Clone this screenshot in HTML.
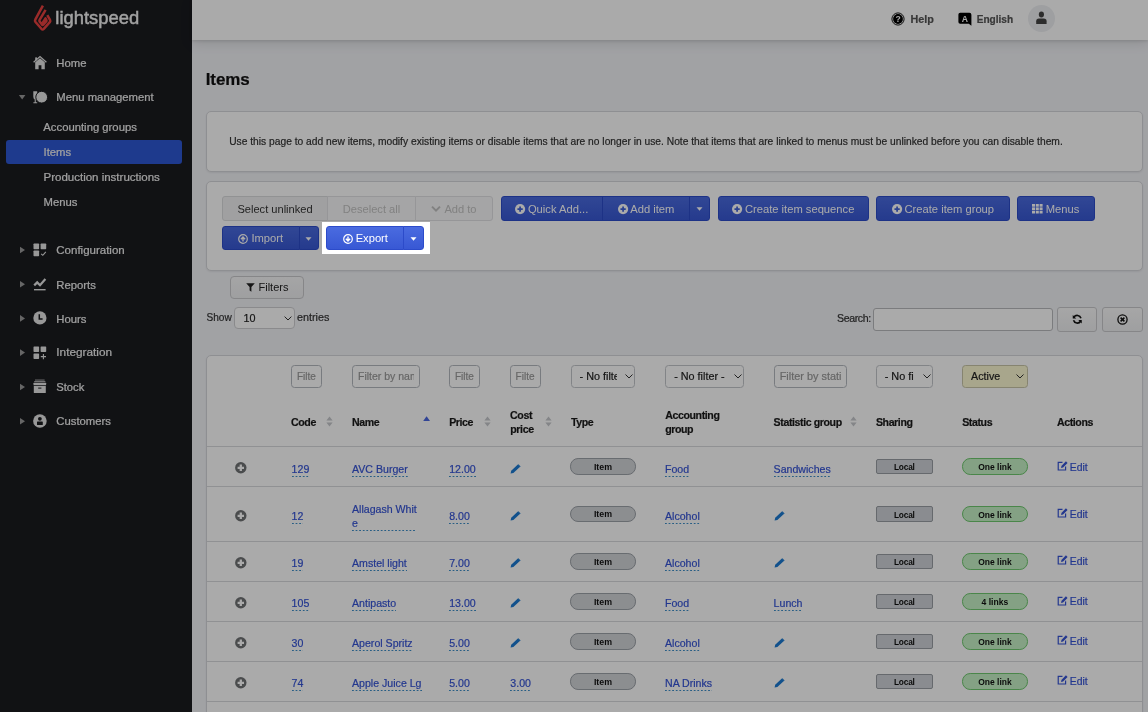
<!DOCTYPE html><html><head><meta charset="utf-8"><style>
*{margin:0;padding:0;box-sizing:border-box}
html,body{width:1148px;height:712px;overflow:hidden;background:#f2f3f7;font-family:"Liberation Sans",sans-serif}
.t{position:absolute;line-height:1;white-space:nowrap;-webkit-text-stroke:0.2px currentColor}
.r{position:absolute}
svg{position:absolute;overflow:visible}
</style></head><body><div id="root" style="position:absolute;left:0;top:0;width:1148px;height:712px;overflow:hidden;will-change:transform"><div class="r" style="left:192px;top:0px;width:956px;height:712px;background:#f2f3f7"></div>
<div class="r" style="left:0px;top:0px;width:192px;height:712px;background:#1a1b1f"></div>
<svg style="left:0;top:0" width="192" height="40"><g fill="none" stroke="#e8413f" stroke-width="2.5" stroke-linejoin="round" stroke-linecap="butt"><path d="M42.9,5.6 L35.4,19.4 Q34.6,20.8 35.5,22 L41.4,28.8 Q42.6,30 43.8,28.8 L49.8,22.2 Q50.7,21 50,19.8 L47.3,15.2"/><path d="M45.6,9.8 L39.6,19.8 Q39,20.9 39.8,21.8 L42,24.6 Q42.6,25.3 43.3,24.6 L46.2,21.4 Q46.8,20.7 46.4,20 L45.5,18.4 L42.6,23"/></g></svg>
<div class="t" style="left:55.30px;top:8.92px;font-size:18.4px;font-weight:400;color:#f2f2f2;-webkit-text-stroke:0.45px #f2f2f2">lightspeed</div>
<svg style="left:33px;top:55px" width="14" height="15" viewBox="0 0 14 15"><path d="M1,1.5 L1,1.5" /><path d="M0.6,7.3 L7,1.6 L13.4,7.3" fill="none" stroke="#e4e4e4" stroke-width="1.3"/><path d="M2.2,7.3 L7,3.2 L11.8,7.3 L11.8,14.2 L8.4,14.2 L8.4,10.2 L5.6,10.2 L5.6,14.2 L2.2,14.2Z" fill="#e4e4e4"/><rect x="2.2" y="2.4" width="1.8" height="3" fill="#e4e4e4"/></svg>
<div class="t" style="left:56.30px;top:58.03px;font-size:11.3px;font-weight:400;color:#f0f0f0;">Home</div>
<svg style="left:0;top:0" width="30" height="712"><path d="M18.9,95 L25.4,95 L22.15,99.4Z" fill="#9a9a9a"/></svg>
<svg style="left:33px;top:91px" width="15" height="13" viewBox="0 0 15 13"><path d="M0.3,0.3 L4.2,0.3 L4.2,5.6 Q4.2,8 2.8,8.4 L2.8,11.3 L4.2,11.3 L4.2,12.2 L0.4,12.2 L0.4,11.3 L1.7,11.3 L1.7,8.4 Q0.3,8 0.3,5.6Z" fill="#e4e4e4"/><circle cx="8.7" cy="6.2" r="5.9" fill="#e4e4e4" stroke="#1a1b1f" stroke-width="1"/><path d="M3.3,4 Q5,1 8.6,0.5" fill="none" stroke="#1a1b1f" stroke-width="0"/></svg>
<div class="t" style="left:56.30px;top:92.03px;font-size:11.3px;font-weight:400;color:#f0f0f0;">Menu management</div>
<div class="r" style="left:6px;top:140px;width:176px;height:24px;background:#2e57d4;border-radius:3px"></div>
<div class="t" style="left:43.30px;top:121.73px;font-size:11.3px;font-weight:400;color:#f0f0f0;">Accounting groups</div>
<div class="t" style="left:43.50px;top:147.13px;font-size:11.3px;font-weight:400;color:#f0f0f0;">Items</div>
<div class="t" style="left:43.50px;top:172.07px;font-size:11.5px;font-weight:400;color:#f0f0f0;">Production instructions</div>
<div class="t" style="left:43.50px;top:197.43px;font-size:11.3px;font-weight:400;color:#f0f0f0;">Menus</div>
<svg style="left:0;top:0" width="30" height="712"><path d="M20,246.7 L25,250 L20,253.3Z" fill="#9a9a9a"/></svg>
<svg style="left:33px;top:243px" width="14" height="14" viewBox="0 0 14 14"><rect x="0.5" y="0.6" width="5.6" height="5.6" rx="0.7" fill="#e4e4e4"/><rect x="7.6" y="0.6" width="5.6" height="5.6" rx="0.7" fill="#e4e4e4"/><rect x="0.5" y="7.6" width="5.6" height="5.6" rx="0.7" fill="#e4e4e4"/><path d="M8.2,10.8 L9.8,12.3 L12.8,8.8" fill="none" stroke="#e4e4e4" stroke-width="1.1"/></svg>
<div class="t" style="left:56.30px;top:245.17px;font-size:11.5px;font-weight:400;color:#f0f0f0;">Configuration</div>
<svg style="left:0;top:0" width="30" height="712"><path d="M20,281.0 L25,284.3 L20,287.6Z" fill="#9a9a9a"/></svg>
<svg style="left:33px;top:277px" width="14" height="15" viewBox="0 0 14 15"><path d="M1.2,8.4 L4.2,5.4 L7,8.2 L12.4,2" fill="none" stroke="#e4e4e4" stroke-width="2.2" stroke-linejoin="miter"/><rect x="1" y="12" width="11.6" height="1.4" fill="#e4e4e4"/></svg>
<div class="t" style="left:56.30px;top:279.63px;font-size:11.3px;font-weight:400;color:#f0f0f0;">Reports</div>
<svg style="left:0;top:0" width="30" height="712"><path d="M20,315.09999999999997 L25,318.4 L20,321.7Z" fill="#9a9a9a"/></svg>
<svg style="left:33px;top:311px" width="14" height="15" viewBox="0 0 14 15"><circle cx="6.9" cy="6.9" r="6.6" fill="#e4e4e4"/><path d="M6.3,3.2 L6.3,7.9 L9.6,7.9" fill="none" stroke="#1a1b1f" stroke-width="1.5"/></svg>
<div class="t" style="left:56.30px;top:313.63px;font-size:11.3px;font-weight:400;color:#f0f0f0;">Hours</div>
<svg style="left:0;top:0" width="30" height="712"><path d="M20,349.3 L25,352.6 L20,355.90000000000003Z" fill="#9a9a9a"/></svg>
<svg style="left:33px;top:346px" width="14" height="14" viewBox="0 0 14 14"><rect x="0.5" y="0.4" width="5.6" height="5.6" rx="0.7" fill="#e4e4e4"/><rect x="7.6" y="0.4" width="5.6" height="5.6" rx="0.7" fill="#e4e4e4"/><rect x="0.5" y="7.4" width="5.6" height="5.6" rx="0.7" fill="#e4e4e4"/><path d="M10.4,8 L10.4,13.2 M7.8,10.6 L13,10.6" fill="none" stroke="#e4e4e4" stroke-width="1.1"/></svg>
<div class="t" style="left:56.30px;top:347.21px;font-size:11.8px;font-weight:400;color:#f0f0f0;">Integration</div>
<svg style="left:0;top:0" width="30" height="712"><path d="M20,383.7 L25,387 L20,390.3Z" fill="#9a9a9a"/></svg>
<svg style="left:33px;top:379px" width="14" height="15" viewBox="0 0 14 15"><rect x="2" y="0.6" width="9.6" height="0.9" fill="#e4e4e4" opacity=".8"/><rect x="1.2" y="2.2" width="11.2" height="0.9" fill="#e4e4e4" opacity=".9"/><rect x="0.5" y="3.8" width="12.6" height="2.4" rx="0.5" fill="#e4e4e4"/><path d="M0.8,7 L12.8,7 L12.8,13.4 Q12.8,14 12.2,14 L1.4,14 Q0.8,14 0.8,13.4Z" fill="#e4e4e4"/><rect x="5.2" y="8.6" width="3.2" height="1" fill="#1a1b1f"/></svg>
<div class="t" style="left:56.30px;top:381.72px;font-size:11.2px;font-weight:400;color:#f0f0f0;">Stock</div>
<svg style="left:0;top:0" width="30" height="712"><path d="M20,418.0 L25,421.3 L20,424.6Z" fill="#9a9a9a"/></svg>
<svg style="left:33px;top:414px" width="14" height="15" viewBox="0 0 14 15"><circle cx="6.9" cy="7" r="6.8" fill="#e4e4e4"/><circle cx="6.9" cy="4.8" r="1.9" fill="#1a1b1f"/><rect x="4" y="7.4" width="5.8" height="3.6" rx="0.6" fill="#1a1b1f"/></svg>
<div class="t" style="left:56.30px;top:415.63px;font-size:11.3px;font-weight:400;color:#f0f0f0;">Customers</div>
<div class="t" style="left:205.80px;top:71.41px;font-size:17px;font-weight:700;color:#111;letter-spacing:-0.15px">Items</div>
<div class="r" style="left:206px;top:111px;width:937px;height:61px;background:#fff;border:1px solid #d6d7db;border-radius:5px;box-shadow:0 1px 2px rgba(0,0,0,.07)"></div>
<div class="t" style="left:229.20px;top:137.22px;font-size:10.25px;font-weight:400;color:#333;">Use this page to add new items, modify existing items or disable items that are no longer in use. Note that items that are linked to menus must be unlinked before you can disable them.</div>
<div class="r" style="left:206px;top:180.5px;width:937px;height:90.5px;background:#fff;border:1px solid #d6d7db;border-radius:5px;box-shadow:0 1px 2px rgba(0,0,0,.07)"></div>
<div style="padding-top:2px;position:absolute;display:flex;align-items:center;justify-content:center;font-size:11.1px;line-height:1;white-space:nowrap;left:222px;top:196px;width:106px;height:24.5px;color:#333;background:#f1f1f2;border:1px solid #dadbdd;border-radius:3px 0 0 3px">Select unlinked</div>
<div style="padding-top:2px;position:absolute;display:flex;align-items:center;justify-content:center;font-size:11.1px;line-height:1;white-space:nowrap;left:327px;top:196px;width:89px;height:24.5px;color:#c2c2c2;background:#f8f8f9;border:1px solid #e2e2e4">Deselect all</div>
<div style="padding-top:2px;position:absolute;display:flex;align-items:center;justify-content:center;font-size:11.1px;line-height:1;white-space:nowrap;left:415px;top:196px;width:78px;height:24.5px;color:#c2c2c2;background:#f8f8f9;border:1px solid #e2e2e4;border-radius:0 3px 3px 0"><svg style="position:static;margin-right:3px" width="10" height="8" viewBox="0 0 10 8"><path d="M1,1.6 L5,5.6 L9,1.6" fill="none" stroke="#c2c2c2" stroke-width="2"/></svg>Add to</div>
<div style="padding-top:2px;position:absolute;display:flex;align-items:center;justify-content:center;font-size:11.2px;line-height:1;white-space:nowrap;left:500.5px;top:196px;width:102.5px;height:24.80000000000001px;color:#fff;background:linear-gradient(#4a6be0,#3858d4);border:1px solid #2c4bca;border-radius:3px 0 0 3px;"><svg style="position:static;margin-right:2.5px" width="10.2" height="10.2" viewBox="0 0 10 10"><circle cx="5" cy="5" r="5" fill="#fff"/><path d="M5,2.4 L5,7.6 M2.4,5 L7.6,5" stroke="#3f60d9" stroke-width="1.7"/></svg>Quick Add...</div>
<div style="padding-top:2px;position:absolute;display:flex;align-items:center;justify-content:center;font-size:11.2px;line-height:1;white-space:nowrap;left:602px;top:196px;width:88px;height:24.80000000000001px;color:#fff;background:linear-gradient(#4a6be0,#3858d4);border:1px solid #2c4bca;border-radius:0;"><svg style="position:static;margin-right:2.5px" width="10.2" height="10.2" viewBox="0 0 10 10"><circle cx="5" cy="5" r="5" fill="#fff"/><path d="M5,2.4 L5,7.6 M2.4,5 L7.6,5" stroke="#3f60d9" stroke-width="1.7"/></svg>Add item</div>
<div style="padding-top:2px;position:absolute;display:flex;align-items:center;justify-content:center;font-size:11.2px;line-height:1;white-space:nowrap;left:689px;top:196px;width:21.399999999999977px;height:24.80000000000001px;color:#fff;background:linear-gradient(#4a6be0,#3858d4);border:1px solid #2c4bca;border-radius:0 3px 3px 0;"><svg style="position:static" width="7" height="4" viewBox="0 0 7 4"><path d="M0.5,0.3 L6.5,0.3 L3.5,3.7Z" fill="#fff"/></svg></div>
<div style="padding-top:2px;position:absolute;display:flex;align-items:center;justify-content:center;font-size:11.2px;line-height:1;white-space:nowrap;left:717.6px;top:196px;width:151.39999999999998px;height:24.80000000000001px;color:#fff;background:linear-gradient(#4a6be0,#3858d4);border:1px solid #2c4bca;border-radius:3px;"><svg style="position:static;margin-right:2.5px" width="10.2" height="10.2" viewBox="0 0 10 10"><circle cx="5" cy="5" r="5" fill="#fff"/><path d="M5,2.4 L5,7.6 M2.4,5 L7.6,5" stroke="#3f60d9" stroke-width="1.7"/></svg>Create item sequence</div>
<div style="padding-top:2px;position:absolute;display:flex;align-items:center;justify-content:center;font-size:11.2px;line-height:1;white-space:nowrap;left:876.3px;top:196px;width:133.30000000000007px;height:24.80000000000001px;color:#fff;background:linear-gradient(#4a6be0,#3858d4);border:1px solid #2c4bca;border-radius:3px;"><svg style="position:static;margin-right:2.5px" width="10.2" height="10.2" viewBox="0 0 10 10"><circle cx="5" cy="5" r="5" fill="#fff"/><path d="M5,2.4 L5,7.6 M2.4,5 L7.6,5" stroke="#3f60d9" stroke-width="1.7"/></svg>Create item group</div>
<div style="padding-top:2px;position:absolute;display:flex;align-items:center;justify-content:center;font-size:11.2px;line-height:1;white-space:nowrap;left:1016.8px;top:196px;width:78.0px;height:24.80000000000001px;color:#fff;background:linear-gradient(#4a6be0,#3858d4);border:1px solid #2c4bca;border-radius:3px;"><svg style="position:static;margin-right:2.5px" width="11" height="10" viewBox="0 0 11 10"><rect x="0.0" y="0.0" width="3" height="2.7" fill="#fff"/><rect x="0.0" y="3.4" width="3" height="2.7" fill="#fff"/><rect x="0.0" y="6.8" width="3" height="2.7" fill="#fff"/><rect x="3.8" y="0.0" width="3" height="2.7" fill="#fff"/><rect x="3.8" y="3.4" width="3" height="2.7" fill="#fff"/><rect x="3.8" y="6.8" width="3" height="2.7" fill="#fff"/><rect x="7.6" y="0.0" width="3" height="2.7" fill="#fff"/><rect x="7.6" y="3.4" width="3" height="2.7" fill="#fff"/><rect x="7.6" y="6.8" width="3" height="2.7" fill="#fff"/></svg>Menus</div>
<div style="padding-top:2px;position:absolute;display:flex;align-items:center;justify-content:center;font-size:11.2px;line-height:1;white-space:nowrap;left:222px;top:226px;width:77.5px;height:23.80000000000001px;color:#fff;background:linear-gradient(#4a6be0,#3858d4);border:1px solid #2c4bca;border-radius:3px 0 0 3px;"><svg style="position:static;margin-right:3px" width="10" height="10" viewBox="0 0 10 10"><circle cx="5" cy="5" r="4.3" fill="none" stroke="#fff" stroke-width="1.2"/><path d="M5,7.6 L5,3.6 M2.9,5.3 L5,3 L7.1,5.3" fill="none" stroke="#fff" stroke-width="1.4"/></svg>Import</div>
<div style="padding-top:2px;position:absolute;display:flex;align-items:center;justify-content:center;font-size:11.2px;line-height:1;white-space:nowrap;left:298.5px;top:226px;width:20.80000000000001px;height:23.80000000000001px;color:#fff;background:linear-gradient(#4a6be0,#3858d4);border:1px solid #2c4bca;border-radius:0 3px 3px 0;"><svg style="position:static" width="7" height="4" viewBox="0 0 7 4"><path d="M0.5,0.3 L6.5,0.3 L3.5,3.7Z" fill="#fff"/></svg></div>
<div style="padding-top:2px;position:absolute;display:flex;align-items:center;justify-content:center;font-size:11.2px;line-height:1;white-space:nowrap;left:326.3px;top:226px;width:78.0px;height:23.80000000000001px;color:#fff;background:linear-gradient(#4a6be0,#3858d4);border:1px solid #2c4bca;border-radius:3px 0 0 3px;"><svg style="position:static;margin-right:3px" width="10" height="10" viewBox="0 0 10 10"><circle cx="5" cy="5" r="4.3" fill="none" stroke="#fff" stroke-width="1.2"/><path d="M5,2.4 L5,6.4 M2.9,4.7 L5,7 L7.1,4.7" fill="none" stroke="#fff" stroke-width="1.4"/></svg>Export</div>
<div style="padding-top:2px;position:absolute;display:flex;align-items:center;justify-content:center;font-size:11.2px;line-height:1;white-space:nowrap;left:403.3px;top:226px;width:20.5px;height:23.80000000000001px;color:#fff;background:linear-gradient(#4a6be0,#3858d4);border:1px solid #2c4bca;border-radius:0 3px 3px 0;"><svg style="position:static" width="7" height="4" viewBox="0 0 7 4"><path d="M0.5,0.3 L6.5,0.3 L3.5,3.7Z" fill="#fff"/></svg></div>
<div style="padding-top:2px;position:absolute;display:flex;align-items:center;justify-content:center;font-size:11.1px;line-height:1;white-space:nowrap;padding-top:0;left:230.3px;top:275.6px;width:73.4px;height:23.8px;color:#222;background:linear-gradient(#f8f8f9,#eeeff1);border:1px solid #c9cacd;border-radius:4px;font-size:11px"><svg style="position:static;margin-right:4px" width="9" height="9" viewBox="0 0 9 9"><path d="M0.2,0.2 L8.8,0.2 L5.4,4 L5.4,8.8 L3.6,7.4 L3.6,4Z" fill="#222"/></svg>Filters</div>
<div class="t" style="left:206.50px;top:312.85px;font-size:10.1px;font-weight:400;color:#333;">Show</div>
<div class="r" style="left:234px;top:307px;width:61px;height:22px;background:#fff;border:1px solid #cfd0d3;border-radius:4px"></div>
<div class="t" style="left:243.40px;top:313.46px;font-size:10.8px;font-weight:400;color:#222;">10</div>
<svg style="left:284px;top:316px" width="8" height="5" viewBox="0 0 8 5"><path d="M0.6,0.6 L4,4 L7.4,0.6" fill="none" stroke="#333" stroke-width="1"/></svg>
<div class="t" style="left:297.00px;top:312.26px;font-size:10.8px;font-weight:400;color:#333;">entries</div>
<div class="t" style="left:837.00px;top:312.93px;font-size:10.6px;font-weight:400;color:#333;letter-spacing:-0.4px">Search:</div>
<div class="r" style="left:873.4px;top:308px;width:179.3px;height:22.8px;background:#fff;border:1px solid #b9babd;border-radius:3px"></div>
<div style="padding-top:2px;position:absolute;display:flex;align-items:center;justify-content:center;font-size:11.1px;line-height:1;white-space:nowrap;padding-top:0;left:1057.1px;top:307.1px;width:40.4px;height:24.6px;background:linear-gradient(#fafafa,#eeeff1);border:1px solid #c9cacd;border-radius:3px"><svg style="position:static" width="10.5" height="10.5" viewBox="0 0 11 11"><path d="M9.4,4.4 A4.1,4.1 0 0 0 2,3.4" fill="none" stroke="#111" stroke-width="1.7"/><path d="M1.6,6.6 A4.1,4.1 0 0 0 9,7.6" fill="none" stroke="#111" stroke-width="1.7"/><path d="M0.8,1 L0.8,4.6 L4.4,4.6Z" fill="#111"/><path d="M10.2,10 L10.2,6.4 L6.6,6.4Z" fill="#111"/></svg></div>
<div style="padding-top:2px;position:absolute;display:flex;align-items:center;justify-content:center;font-size:11.1px;line-height:1;white-space:nowrap;padding-top:0;left:1101.7px;top:307.1px;width:41.3px;height:24.6px;background:linear-gradient(#fafafa,#eeeff1);border:1px solid #c9cacd;border-radius:3px"><svg style="position:static" width="11" height="11" viewBox="0 0 11 11"><circle cx="5.5" cy="5.5" r="4.6" fill="none" stroke="#111" stroke-width="1.3"/><path d="M3.6,3.6 L7.4,7.4 M7.4,3.6 L3.6,7.4" stroke="#111" stroke-width="1.5"/></svg></div>
<div class="r" style="left:206px;top:355px;width:937px;height:405px;background:#fff;border:1px solid #d6d7db;border-radius:5px;box-shadow:0 1px 2px rgba(0,0,0,.07)"></div>
<div class="r" style="left:291.1px;top:365.1px;width:31.099999999999966px;height:22.5px;background:#fff;border:1px solid #b4b9bf;border-radius:3.5px;overflow:hidden"></div>
<div class="t" style="left:297px;top:371.74px;font-size:10.0px;color:#9a9a9a;width:20px;overflow:hidden">Filte</div>
<div class="r" style="left:352px;top:365.1px;width:67.5px;height:22.5px;background:#fff;border:1px solid #b4b9bf;border-radius:3.5px;overflow:hidden"></div>
<div class="t" style="left:358px;top:371.31px;font-size:10.5px;color:#9a9a9a;width:56px;overflow:hidden">Filter by name</div>
<div class="r" style="left:449.2px;top:365.1px;width:31.19999999999999px;height:22.5px;background:#fff;border:1px solid #b4b9bf;border-radius:3.5px;overflow:hidden"></div>
<div class="t" style="left:455px;top:371.74px;font-size:10.0px;color:#9a9a9a;width:20.5px;overflow:hidden">Filte</div>
<div class="r" style="left:509.7px;top:365.1px;width:31.19999999999999px;height:22.5px;background:#fff;border:1px solid #b4b9bf;border-radius:3.5px;overflow:hidden"></div>
<div class="t" style="left:515.6px;top:371.74px;font-size:10.0px;color:#9a9a9a;width:20.399999999999977px;overflow:hidden">Filte</div>
<div class="r" style="left:570.5px;top:365.1px;width:64.70000000000005px;height:22.5px;background:#fff;border:1px solid #c4c7cb;border-radius:3.5px"></div>
<div class="t" style="left:579.6px;top:371.36px;font-size:10.8px;color:#222;width:37.89999999999998px;overflow:hidden">- No filter -</div>
<svg style="left:625px;top:374px" width="8" height="5" viewBox="0 0 8 5"><path d="M0.5,0.5 L4,4 L7.5,0.5" fill="none" stroke="#333" stroke-width="1"/></svg>
<div class="r" style="left:665.4px;top:365.1px;width:78.5px;height:22.5px;background:#fff;border:1px solid #c4c7cb;border-radius:3.5px"></div>
<div class="t" style="left:674.2px;top:371.36px;font-size:10.8px;color:#222;width:51.799999999999955px;overflow:hidden">- No filter -</div>
<svg style="left:734px;top:374px" width="8" height="5" viewBox="0 0 8 5"><path d="M0.5,0.5 L4,4 L7.5,0.5" fill="none" stroke="#333" stroke-width="1"/></svg>
<div class="r" style="left:773.8px;top:365.1px;width:72.90000000000009px;height:22.5px;background:#fff;border:1px solid #b4b9bf;border-radius:3.5px;overflow:hidden"></div>
<div class="t" style="left:779.7px;top:370.97px;font-size:10.9px;color:#9a9a9a;width:61.799999999999955px;overflow:hidden">Filter by statistic</div>
<div class="r" style="left:876.1px;top:365.1px;width:56.5px;height:22.5px;background:#fff;border:1px solid #c4c7cb;border-radius:3.5px"></div>
<div class="t" style="left:884.7px;top:371.27px;font-size:10.9px;color:#222;width:29.299999999999955px;overflow:hidden">- No filter -</div>
<svg style="left:922.5px;top:374px" width="8" height="5" viewBox="0 0 8 5"><path d="M0.5,0.5 L4,4 L7.5,0.5" fill="none" stroke="#333" stroke-width="1"/></svg>
<div class="r" style="left:962.4px;top:365.1px;width:65.19999999999993px;height:22.5px;background:#fdfad2;border:1px solid #c9c6a8;border-radius:3.5px"></div>
<div class="t" style="left:971.1px;top:371.44px;font-size:10.7px;color:#222;width:33.89999999999998px;overflow:hidden">Active</div>
<svg style="left:1016.3px;top:374px" width="8" height="5" viewBox="0 0 8 5"><path d="M0.5,0.5 L4,4 L7.5,0.5" fill="none" stroke="#333" stroke-width="1"/></svg>
<div class="t" style="left:291.00px;top:417.03px;font-size:10.6px;font-weight:700;color:#1a1a1a;letter-spacing:-0.4px">Code</div>
<svg style="left:326.3px;top:416.4px" width="7" height="11" viewBox="0 0 7 11"><path d="M0.4,4.6 L3.5,0.4 L6.6,4.6Z M0.4,6.4 L3.5,10.6 L6.6,6.4Z" fill="#c6c8cc"/></svg>
<div class="t" style="left:352.00px;top:417.03px;font-size:10.6px;font-weight:700;color:#1a1a1a;letter-spacing:-0.4px">Name</div>
<svg style="left:423px;top:416.4px" width="8" height="6" viewBox="0 0 8 6"><path d="M0.2,5 L3.6,0.2 L7,5Z" fill="#4a66e0"/></svg>
<div class="t" style="left:449.20px;top:417.03px;font-size:10.6px;font-weight:700;color:#1a1a1a;letter-spacing:-0.4px">Price</div>
<svg style="left:484px;top:416.4px" width="7" height="11" viewBox="0 0 7 11"><path d="M0.4,4.6 L3.5,0.4 L6.6,4.6Z M0.4,6.4 L3.5,10.6 L6.6,6.4Z" fill="#c6c8cc"/></svg>
<div class="t" style="left:510.10px;top:409.83px;font-size:10.6px;font-weight:700;color:#1a1a1a;letter-spacing:-0.4px">Cost</div>
<div class="t" style="left:510.30px;top:424.13px;font-size:10.6px;font-weight:700;color:#1a1a1a;letter-spacing:-0.4px">price</div>
<svg style="left:545.2px;top:416.4px" width="7" height="11" viewBox="0 0 7 11"><path d="M0.4,4.6 L3.5,0.4 L6.6,4.6Z M0.4,6.4 L3.5,10.6 L6.6,6.4Z" fill="#c6c8cc"/></svg>
<div class="t" style="left:571.00px;top:417.03px;font-size:10.6px;font-weight:700;color:#1a1a1a;letter-spacing:-0.4px">Type</div>
<div class="t" style="left:665.20px;top:409.83px;font-size:10.6px;font-weight:700;color:#1a1a1a;letter-spacing:-0.4px">Accounting</div>
<div class="t" style="left:665.20px;top:424.13px;font-size:10.6px;font-weight:700;color:#1a1a1a;letter-spacing:-0.4px">group</div>
<div class="t" style="left:773.60px;top:417.03px;font-size:10.6px;font-weight:700;color:#1a1a1a;letter-spacing:-0.4px">Statistic group</div>
<svg style="left:850.2px;top:416.4px" width="7" height="11" viewBox="0 0 7 11"><path d="M0.4,4.6 L3.5,0.4 L6.6,4.6Z M0.4,6.4 L3.5,10.6 L6.6,6.4Z" fill="#c6c8cc"/></svg>
<div class="t" style="left:875.90px;top:417.03px;font-size:10.6px;font-weight:700;color:#1a1a1a;letter-spacing:-0.4px">Sharing</div>
<div class="t" style="left:962.20px;top:417.03px;font-size:10.6px;font-weight:700;color:#1a1a1a;letter-spacing:-0.4px">Status</div>
<div class="t" style="left:1056.90px;top:417.03px;font-size:10.6px;font-weight:700;color:#1a1a1a;letter-spacing:-0.4px">Actions</div>
<div class="r" style="left:207px;top:446px;width:935px;height:1px;background:#d9dadd"></div>
<div class="r" style="left:207px;top:486px;width:935px;height:1px;background:#d9dadd"></div>
<div class="r" style="left:207px;top:541px;width:935px;height:1px;background:#d9dadd"></div>
<div class="r" style="left:207px;top:581px;width:935px;height:1px;background:#d9dadd"></div>
<div class="r" style="left:207px;top:621px;width:935px;height:1px;background:#d9dadd"></div>
<div class="r" style="left:207px;top:661px;width:935px;height:1px;background:#d9dadd"></div>
<div class="r" style="left:207px;top:701px;width:935px;height:1px;background:#d9dadd"></div>
<svg style="left:235.4px;top:462.0px" width="12" height="12" viewBox="0 0 12 12"><circle cx="5.8" cy="5.8" r="5.7" fill="#707274"/><path d="M5.8,2.6 L5.8,9 M2.6,5.8 L9,5.8" stroke="#fff" stroke-width="2.3"/></svg>
<div class="t" style="left:291.6px;top:463.73px;font-size:10.6px;color:#3553d6;padding-bottom:2.6px;background:linear-gradient(90deg,#3d8ec8 0 2.1px,transparent 2.1px) left bottom/3.6px 1px repeat-x">129</div>
<div class="t" style="left:352px;top:463.73px;font-size:10.6px;color:#3553d6;padding-bottom:2.6px;background:linear-gradient(90deg,#3d8ec8 0 2.1px,transparent 2.1px) left bottom/3.6px 1px repeat-x">AVC Burger</div>
<div class="t" style="left:449.2px;top:463.73px;font-size:10.6px;color:#3553d6;padding-bottom:2.6px;background:linear-gradient(90deg,#3d8ec8 0 2.1px,transparent 2.1px) left bottom/3.6px 1px repeat-x">12.00</div>
<svg style="left:509.5px;top:463.7px" width="11" height="10" viewBox="0 0 11 10"><path d="M0.6,9.4 L1.2,6.8 L7.6,0.8 L9.8,3 L3.4,9Z" fill="#1b7ad2"/><path d="M7.4,1 L8.4,0.2 L10.6,2.4 L9.8,3.2Z" fill="#1b7ad2"/></svg>
<div style="position:absolute;left:570.2px;top:458.40px;width:65.5px;height:16.2px;border-radius:8.1px;background:#d2d5d9;border:1px solid #9da2a8;padding-top:1px;display:flex;align-items:center;justify-content:center;font-size:8.8px;font-weight:700;color:#111;line-height:1">Item</div>
<div class="t" style="left:665px;top:463.73px;font-size:10.6px;color:#3553d6;padding-bottom:2.6px;background:linear-gradient(90deg,#3d8ec8 0 2.1px,transparent 2.1px) left bottom/3.6px 1px repeat-x">Food</div>
<div class="t" style="left:773.6px;top:463.73px;font-size:10.6px;color:#3553d6;padding-bottom:2.6px;background:linear-gradient(90deg,#3d8ec8 0 2.1px,transparent 2.1px) left bottom/3.6px 1px repeat-x">Sandwiches</div>
<div style="position:absolute;left:876px;top:458.80px;width:56.7px;height:15.4px;border-radius:2px;background:#cfd3d8;border:1px solid #999ea4;padding-top:1.6px;display:flex;align-items:center;justify-content:center;font-size:8.3px;font-weight:700;color:#111;line-height:1;letter-spacing:-0.2px">Local</div>
<div style="position:absolute;left:962.2px;top:458.30px;width:65.5px;height:16.4px;border-radius:8.2px;background:#c6f2c6;border:1px solid #6fca6f;padding-top:1.6px;display:flex;align-items:center;justify-content:center;font-size:8.5px;font-weight:700;color:#111;line-height:1">One link</div>
<svg style="left:1056.6px;top:461.20px" width="11" height="10" viewBox="0 0 12 11"><path d="M6,1.6 L1.3,1.6 L1.3,9.9 L9.4,9.9 L9.4,6" fill="none" stroke="#3553d6" stroke-width="1.3"/><path d="M4.4,7.6 L4.8,5.4 L9.8,0.4 L11.6,2.2 L6.6,7.2Z" fill="#3553d6"/></svg>
<div class="t" style="left:1069.80px;top:463.10px;font-size:10.4px;font-weight:400;color:#3553d6;">Edit</div>
<svg style="left:235.4px;top:509.49999999999994px" width="12" height="12" viewBox="0 0 12 12"><circle cx="5.8" cy="5.8" r="5.7" fill="#707274"/><path d="M5.8,2.6 L5.8,9 M2.6,5.8 L9,5.8" stroke="#fff" stroke-width="2.3"/></svg>
<div class="t" style="left:291.6px;top:510.93px;font-size:10.6px;color:#3553d6;padding-bottom:2.6px;background:linear-gradient(90deg,#3d8ec8 0 2.1px,transparent 2.1px) left bottom/3.6px 1px repeat-x">12</div>
<div class="t" style="left:352.00px;top:503.53px;font-size:10.6px;font-weight:400;color:#3553d6;">Allagash Whit</div>
<div class="t" style="left:352px;top:517.83px;font-size:10.6px;color:#3553d6;padding-bottom:2.6px;background:linear-gradient(90deg,#3d8ec8 0 2.1px,transparent 2.1px) left bottom/3.6px 1px repeat-x">e<span style="display:inline-block;width:58.2px"></span></div>
<div class="t" style="left:449.2px;top:510.93px;font-size:10.6px;color:#3553d6;padding-bottom:2.6px;background:linear-gradient(90deg,#3d8ec8 0 2.1px,transparent 2.1px) left bottom/3.6px 1px repeat-x">8.00</div>
<svg style="left:509.5px;top:510.9px" width="11" height="10" viewBox="0 0 11 10"><path d="M0.6,9.4 L1.2,6.8 L7.6,0.8 L9.8,3 L3.4,9Z" fill="#1b7ad2"/><path d="M7.4,1 L8.4,0.2 L10.6,2.4 L9.8,3.2Z" fill="#1b7ad2"/></svg>
<div style="position:absolute;left:570.2px;top:505.90px;width:65.5px;height:16.2px;border-radius:8.1px;background:#d2d5d9;border:1px solid #9da2a8;padding-top:1px;display:flex;align-items:center;justify-content:center;font-size:8.8px;font-weight:700;color:#111;line-height:1">Item</div>
<div class="t" style="left:665px;top:510.93px;font-size:10.6px;color:#3553d6;padding-bottom:2.6px;background:linear-gradient(90deg,#3d8ec8 0 2.1px,transparent 2.1px) left bottom/3.6px 1px repeat-x">Alcohol</div>
<svg style="left:773.6px;top:510.9px" width="11" height="10" viewBox="0 0 11 10"><path d="M0.6,9.4 L1.2,6.8 L7.6,0.8 L9.8,3 L3.4,9Z" fill="#1b7ad2"/><path d="M7.4,1 L8.4,0.2 L10.6,2.4 L9.8,3.2Z" fill="#1b7ad2"/></svg>
<div style="position:absolute;left:876px;top:506.30px;width:56.7px;height:15.4px;border-radius:2px;background:#cfd3d8;border:1px solid #999ea4;padding-top:1.6px;display:flex;align-items:center;justify-content:center;font-size:8.3px;font-weight:700;color:#111;line-height:1;letter-spacing:-0.2px">Local</div>
<div style="position:absolute;left:962.2px;top:505.80px;width:65.5px;height:16.4px;border-radius:8.2px;background:#c6f2c6;border:1px solid #6fca6f;padding-top:1.6px;display:flex;align-items:center;justify-content:center;font-size:8.5px;font-weight:700;color:#111;line-height:1">One link</div>
<svg style="left:1056.6px;top:508.40px" width="11" height="10" viewBox="0 0 12 11"><path d="M6,1.6 L1.3,1.6 L1.3,9.9 L9.4,9.9 L9.4,6" fill="none" stroke="#3553d6" stroke-width="1.3"/><path d="M4.4,7.6 L4.8,5.4 L9.8,0.4 L11.6,2.2 L6.6,7.2Z" fill="#3553d6"/></svg>
<div class="t" style="left:1069.80px;top:510.30px;font-size:10.4px;font-weight:400;color:#3553d6;">Edit</div>
<svg style="left:235.4px;top:557.0px" width="12" height="12" viewBox="0 0 12 12"><circle cx="5.8" cy="5.8" r="5.7" fill="#707274"/><path d="M5.8,2.6 L5.8,9 M2.6,5.8 L9,5.8" stroke="#fff" stroke-width="2.3"/></svg>
<div class="t" style="left:291.6px;top:557.93px;font-size:10.6px;color:#3553d6;padding-bottom:2.6px;background:linear-gradient(90deg,#3d8ec8 0 2.1px,transparent 2.1px) left bottom/3.6px 1px repeat-x">19</div>
<div class="t" style="left:352px;top:557.93px;font-size:10.6px;color:#3553d6;padding-bottom:2.6px;background:linear-gradient(90deg,#3d8ec8 0 2.1px,transparent 2.1px) left bottom/3.6px 1px repeat-x">Amstel light</div>
<div class="t" style="left:449.2px;top:557.93px;font-size:10.6px;color:#3553d6;padding-bottom:2.6px;background:linear-gradient(90deg,#3d8ec8 0 2.1px,transparent 2.1px) left bottom/3.6px 1px repeat-x">7.00</div>
<svg style="left:509.5px;top:557.9px" width="11" height="10" viewBox="0 0 11 10"><path d="M0.6,9.4 L1.2,6.8 L7.6,0.8 L9.8,3 L3.4,9Z" fill="#1b7ad2"/><path d="M7.4,1 L8.4,0.2 L10.6,2.4 L9.8,3.2Z" fill="#1b7ad2"/></svg>
<div style="position:absolute;left:570.2px;top:553.40px;width:65.5px;height:16.2px;border-radius:8.1px;background:#d2d5d9;border:1px solid #9da2a8;padding-top:1px;display:flex;align-items:center;justify-content:center;font-size:8.8px;font-weight:700;color:#111;line-height:1">Item</div>
<div class="t" style="left:665px;top:557.93px;font-size:10.6px;color:#3553d6;padding-bottom:2.6px;background:linear-gradient(90deg,#3d8ec8 0 2.1px,transparent 2.1px) left bottom/3.6px 1px repeat-x">Alcohol</div>
<svg style="left:773.6px;top:557.9px" width="11" height="10" viewBox="0 0 11 10"><path d="M0.6,9.4 L1.2,6.8 L7.6,0.8 L9.8,3 L3.4,9Z" fill="#1b7ad2"/><path d="M7.4,1 L8.4,0.2 L10.6,2.4 L9.8,3.2Z" fill="#1b7ad2"/></svg>
<div style="position:absolute;left:876px;top:553.80px;width:56.7px;height:15.4px;border-radius:2px;background:#cfd3d8;border:1px solid #999ea4;padding-top:1.6px;display:flex;align-items:center;justify-content:center;font-size:8.3px;font-weight:700;color:#111;line-height:1;letter-spacing:-0.2px">Local</div>
<div style="position:absolute;left:962.2px;top:553.30px;width:65.5px;height:16.4px;border-radius:8.2px;background:#c6f2c6;border:1px solid #6fca6f;padding-top:1.6px;display:flex;align-items:center;justify-content:center;font-size:8.5px;font-weight:700;color:#111;line-height:1">One link</div>
<svg style="left:1056.6px;top:555.40px" width="11" height="10" viewBox="0 0 12 11"><path d="M6,1.6 L1.3,1.6 L1.3,9.9 L9.4,9.9 L9.4,6" fill="none" stroke="#3553d6" stroke-width="1.3"/><path d="M4.4,7.6 L4.8,5.4 L9.8,0.4 L11.6,2.2 L6.6,7.2Z" fill="#3553d6"/></svg>
<div class="t" style="left:1069.80px;top:557.30px;font-size:10.4px;font-weight:400;color:#3553d6;">Edit</div>
<svg style="left:235.4px;top:597.0px" width="12" height="12" viewBox="0 0 12 12"><circle cx="5.8" cy="5.8" r="5.7" fill="#707274"/><path d="M5.8,2.6 L5.8,9 M2.6,5.8 L9,5.8" stroke="#fff" stroke-width="2.3"/></svg>
<div class="t" style="left:291.6px;top:598.03px;font-size:10.6px;color:#3553d6;padding-bottom:2.6px;background:linear-gradient(90deg,#3d8ec8 0 2.1px,transparent 2.1px) left bottom/3.6px 1px repeat-x">105</div>
<div class="t" style="left:352px;top:598.03px;font-size:10.6px;color:#3553d6;padding-bottom:2.6px;background:linear-gradient(90deg,#3d8ec8 0 2.1px,transparent 2.1px) left bottom/3.6px 1px repeat-x">Antipasto</div>
<div class="t" style="left:449.2px;top:598.03px;font-size:10.6px;color:#3553d6;padding-bottom:2.6px;background:linear-gradient(90deg,#3d8ec8 0 2.1px,transparent 2.1px) left bottom/3.6px 1px repeat-x">13.00</div>
<svg style="left:509.5px;top:598.0px" width="11" height="10" viewBox="0 0 11 10"><path d="M0.6,9.4 L1.2,6.8 L7.6,0.8 L9.8,3 L3.4,9Z" fill="#1b7ad2"/><path d="M7.4,1 L8.4,0.2 L10.6,2.4 L9.8,3.2Z" fill="#1b7ad2"/></svg>
<div style="position:absolute;left:570.2px;top:593.40px;width:65.5px;height:16.2px;border-radius:8.1px;background:#d2d5d9;border:1px solid #9da2a8;padding-top:1px;display:flex;align-items:center;justify-content:center;font-size:8.8px;font-weight:700;color:#111;line-height:1">Item</div>
<div class="t" style="left:665px;top:598.03px;font-size:10.6px;color:#3553d6;padding-bottom:2.6px;background:linear-gradient(90deg,#3d8ec8 0 2.1px,transparent 2.1px) left bottom/3.6px 1px repeat-x">Food</div>
<div class="t" style="left:773.6px;top:598.03px;font-size:10.6px;color:#3553d6;padding-bottom:2.6px;background:linear-gradient(90deg,#3d8ec8 0 2.1px,transparent 2.1px) left bottom/3.6px 1px repeat-x">Lunch</div>
<div style="position:absolute;left:876px;top:593.80px;width:56.7px;height:15.4px;border-radius:2px;background:#cfd3d8;border:1px solid #999ea4;padding-top:1.6px;display:flex;align-items:center;justify-content:center;font-size:8.3px;font-weight:700;color:#111;line-height:1;letter-spacing:-0.2px">Local</div>
<div style="position:absolute;left:962.2px;top:593.30px;width:65.5px;height:16.4px;border-radius:8.2px;background:#c6f2c6;border:1px solid #6fca6f;padding-top:1.6px;display:flex;align-items:center;justify-content:center;font-size:8.6px;font-weight:700;color:#111;line-height:1">4 links</div>
<svg style="left:1056.6px;top:595.50px" width="11" height="10" viewBox="0 0 12 11"><path d="M6,1.6 L1.3,1.6 L1.3,9.9 L9.4,9.9 L9.4,6" fill="none" stroke="#3553d6" stroke-width="1.3"/><path d="M4.4,7.6 L4.8,5.4 L9.8,0.4 L11.6,2.2 L6.6,7.2Z" fill="#3553d6"/></svg>
<div class="t" style="left:1069.80px;top:597.40px;font-size:10.4px;font-weight:400;color:#3553d6;">Edit</div>
<svg style="left:235.4px;top:637.0px" width="12" height="12" viewBox="0 0 12 12"><circle cx="5.8" cy="5.8" r="5.7" fill="#707274"/><path d="M5.8,2.6 L5.8,9 M2.6,5.8 L9,5.8" stroke="#fff" stroke-width="2.3"/></svg>
<div class="t" style="left:291.6px;top:637.83px;font-size:10.6px;color:#3553d6;padding-bottom:2.6px;background:linear-gradient(90deg,#3d8ec8 0 2.1px,transparent 2.1px) left bottom/3.6px 1px repeat-x">30</div>
<div class="t" style="left:352px;top:637.83px;font-size:10.6px;color:#3553d6;padding-bottom:2.6px;background:linear-gradient(90deg,#3d8ec8 0 2.1px,transparent 2.1px) left bottom/3.6px 1px repeat-x">Aperol Spritz</div>
<div class="t" style="left:449.2px;top:637.83px;font-size:10.6px;color:#3553d6;padding-bottom:2.6px;background:linear-gradient(90deg,#3d8ec8 0 2.1px,transparent 2.1px) left bottom/3.6px 1px repeat-x">5.00</div>
<svg style="left:509.5px;top:637.8px" width="11" height="10" viewBox="0 0 11 10"><path d="M0.6,9.4 L1.2,6.8 L7.6,0.8 L9.8,3 L3.4,9Z" fill="#1b7ad2"/><path d="M7.4,1 L8.4,0.2 L10.6,2.4 L9.8,3.2Z" fill="#1b7ad2"/></svg>
<div style="position:absolute;left:570.2px;top:633.40px;width:65.5px;height:16.2px;border-radius:8.1px;background:#d2d5d9;border:1px solid #9da2a8;padding-top:1px;display:flex;align-items:center;justify-content:center;font-size:8.8px;font-weight:700;color:#111;line-height:1">Item</div>
<div class="t" style="left:665px;top:637.83px;font-size:10.6px;color:#3553d6;padding-bottom:2.6px;background:linear-gradient(90deg,#3d8ec8 0 2.1px,transparent 2.1px) left bottom/3.6px 1px repeat-x">Alcohol</div>
<svg style="left:773.6px;top:637.8px" width="11" height="10" viewBox="0 0 11 10"><path d="M0.6,9.4 L1.2,6.8 L7.6,0.8 L9.8,3 L3.4,9Z" fill="#1b7ad2"/><path d="M7.4,1 L8.4,0.2 L10.6,2.4 L9.8,3.2Z" fill="#1b7ad2"/></svg>
<div style="position:absolute;left:876px;top:633.80px;width:56.7px;height:15.4px;border-radius:2px;background:#cfd3d8;border:1px solid #999ea4;padding-top:1.6px;display:flex;align-items:center;justify-content:center;font-size:8.3px;font-weight:700;color:#111;line-height:1;letter-spacing:-0.2px">Local</div>
<div style="position:absolute;left:962.2px;top:633.30px;width:65.5px;height:16.4px;border-radius:8.2px;background:#c6f2c6;border:1px solid #6fca6f;padding-top:1.6px;display:flex;align-items:center;justify-content:center;font-size:8.5px;font-weight:700;color:#111;line-height:1">One link</div>
<svg style="left:1056.6px;top:635.30px" width="11" height="10" viewBox="0 0 12 11"><path d="M6,1.6 L1.3,1.6 L1.3,9.9 L9.4,9.9 L9.4,6" fill="none" stroke="#3553d6" stroke-width="1.3"/><path d="M4.4,7.6 L4.8,5.4 L9.8,0.4 L11.6,2.2 L6.6,7.2Z" fill="#3553d6"/></svg>
<div class="t" style="left:1069.80px;top:637.20px;font-size:10.4px;font-weight:400;color:#3553d6;">Edit</div>
<svg style="left:235.4px;top:677.0px" width="12" height="12" viewBox="0 0 12 12"><circle cx="5.8" cy="5.8" r="5.7" fill="#707274"/><path d="M5.8,2.6 L5.8,9 M2.6,5.8 L9,5.8" stroke="#fff" stroke-width="2.3"/></svg>
<div class="t" style="left:291.6px;top:677.73px;font-size:10.6px;color:#3553d6;padding-bottom:2.6px;background:linear-gradient(90deg,#3d8ec8 0 2.1px,transparent 2.1px) left bottom/3.6px 1px repeat-x">74</div>
<div class="t" style="left:352px;top:677.73px;font-size:10.6px;color:#3553d6;padding-bottom:2.6px;background:linear-gradient(90deg,#3d8ec8 0 2.1px,transparent 2.1px) left bottom/3.6px 1px repeat-x">Apple Juice Lg</div>
<div class="t" style="left:449.2px;top:677.73px;font-size:10.6px;color:#3553d6;padding-bottom:2.6px;background:linear-gradient(90deg,#3d8ec8 0 2.1px,transparent 2.1px) left bottom/3.6px 1px repeat-x">5.00</div>
<div class="t" style="left:510.3px;top:677.73px;font-size:10.6px;color:#3553d6;padding-bottom:2.6px;background:linear-gradient(90deg,#3d8ec8 0 2.1px,transparent 2.1px) left bottom/3.6px 1px repeat-x">3.00</div>
<div style="position:absolute;left:570.2px;top:673.40px;width:65.5px;height:16.2px;border-radius:8.1px;background:#d2d5d9;border:1px solid #9da2a8;padding-top:1px;display:flex;align-items:center;justify-content:center;font-size:8.8px;font-weight:700;color:#111;line-height:1">Item</div>
<div class="t" style="left:665px;top:677.73px;font-size:10.6px;color:#3553d6;padding-bottom:2.6px;background:linear-gradient(90deg,#3d8ec8 0 2.1px,transparent 2.1px) left bottom/3.6px 1px repeat-x">NA Drinks</div>
<svg style="left:773.6px;top:677.7px" width="11" height="10" viewBox="0 0 11 10"><path d="M0.6,9.4 L1.2,6.8 L7.6,0.8 L9.8,3 L3.4,9Z" fill="#1b7ad2"/><path d="M7.4,1 L8.4,0.2 L10.6,2.4 L9.8,3.2Z" fill="#1b7ad2"/></svg>
<div style="position:absolute;left:876px;top:673.80px;width:56.7px;height:15.4px;border-radius:2px;background:#cfd3d8;border:1px solid #999ea4;padding-top:1.6px;display:flex;align-items:center;justify-content:center;font-size:8.3px;font-weight:700;color:#111;line-height:1;letter-spacing:-0.2px">Local</div>
<div style="position:absolute;left:962.2px;top:673.30px;width:65.5px;height:16.4px;border-radius:8.2px;background:#c6f2c6;border:1px solid #6fca6f;padding-top:1.6px;display:flex;align-items:center;justify-content:center;font-size:8.5px;font-weight:700;color:#111;line-height:1">One link</div>
<svg style="left:1056.6px;top:675.20px" width="11" height="10" viewBox="0 0 12 11"><path d="M6,1.6 L1.3,1.6 L1.3,9.9 L9.4,9.9 L9.4,6" fill="none" stroke="#3553d6" stroke-width="1.3"/><path d="M4.4,7.6 L4.8,5.4 L9.8,0.4 L11.6,2.2 L6.6,7.2Z" fill="#3553d6"/></svg>
<div class="t" style="left:1069.80px;top:677.10px;font-size:10.4px;font-weight:400;color:#3553d6;">Edit</div>
<div class="r" style="left:192px;top:0px;width:956px;height:40px;background:#fff;box-shadow:0 1px 3px rgba(0,0,0,.12),0 3px 12px rgba(0,0,0,.12)"></div>
<svg style="left:891px;top:12px" width="15" height="15" viewBox="0 0 15 15"><circle cx="7" cy="7" r="6.1" fill="none" stroke="#000" stroke-width="0.9"/><circle cx="7" cy="7" r="4.9" fill="#000"/><text x="7" y="10.2" text-anchor="middle" font-family="Liberation Sans" font-weight="700" font-size="8.5" fill="#fff">?</text></svg>
<div class="t" style="left:910.50px;top:14.06px;font-size:10.8px;font-weight:700;color:#555;">Help</div>
<svg style="left:958px;top:12px" width="15" height="15" viewBox="0 0 15 15"><path d="M2.2,0.8 L11.4,0.8 Q13.4,0.8 13.4,2.8 L13.4,13.8 L10.8,11.8 L2.2,11.8 Q0.4,11.8 0.4,10 L0.4,2.6 Q0.4,0.8 2.2,0.8Z" fill="#000"/><text x="6.9" y="9.9" text-anchor="middle" font-family="Liberation Sans" font-weight="700" font-size="8.6" fill="#fff">A</text></svg>
<div class="t" style="left:976.70px;top:14.65px;font-size:10.1px;font-weight:700;color:#555;">English</div>
<div class="r" style="left:1028px;top:4.5px;width:27px;height:27px;border-radius:50%;background:#eeeff2"></div>
<svg style="left:1035px;top:11px" width="13" height="14" viewBox="0 0 13 14"><ellipse cx="6.4" cy="3.4" rx="2.6" ry="3" fill="#444"/><path d="M1.2,13 L1.2,10.2 Q1.2,7.4 4,7.4 L8.8,7.4 Q11.6,7.4 11.6,10.2 L11.6,13Z" fill="#444"/></svg>
<div class="r" style="left:322px;top:222px;width:108px;height:32px;box-shadow:0 0 0 3000px rgba(0,0,0,.333)"></div></div></body></html>
